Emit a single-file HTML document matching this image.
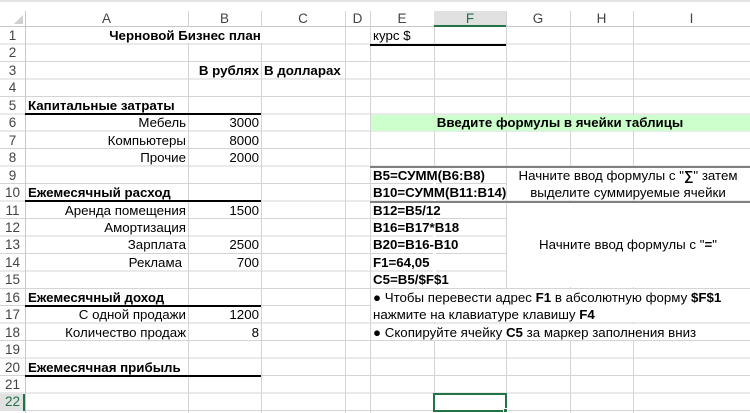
<!DOCTYPE html>
<html><head><meta charset="utf-8"><style>
*{margin:0;padding:0;box-sizing:border-box}
body{width:750px;height:413px;overflow:hidden;background:#fff;position:relative;font-family:"Liberation Sans",Arial,sans-serif;font-size:13.3px;color:#000}
div{position:absolute}
.v{width:1px;background:#d4d4d4;top:11px;height:402px}
.hd{top:11px;height:16px;line-height:16px;text-align:center;color:#444;font-size:13.5px}
.rn{left:0;width:25px;text-align:center;color:#444;height:17.45px;line-height:18px;font-size:13.5px}
.c{height:17.45px;line-height:18px;white-space:nowrap}
.b{font-weight:bold}
.r{text-align:right}
.w{background:#fff}
.tk{height:2px;background:#000}
.gy{height:2px;background:#808080}
</style></head><body>
<div style="left:0;top:0;width:750px;height:2px;background:#e4e4e4"></div>
<div style="left:0;top:27px;width:750px;height:386px;background:repeating-linear-gradient(to bottom,transparent 0,transparent 16.45px,#d4d4d4 16.45px,#d4d4d4 17.45px)"></div>
<div style="left:0;top:26px;width:750px;height:1px;background:#c8c8c8"></div>
<div class="v" style="left:25px;background:#c8c8c8"></div>
<div class="v" style="left:188px"></div>
<div class="v" style="left:261px"></div>
<div class="v" style="left:345px"></div>
<div class="v" style="left:370px"></div>
<div class="v" style="left:434px"></div>
<div class="v" style="left:506px"></div>
<div class="v" style="left:570px"></div>
<div class="v" style="left:633px"></div>
<div style="left:14px;top:15px;width:0;height:0;border-left:9px solid transparent;border-bottom:9px solid #d0d0d0"></div>
<div style="left:434px;top:11px;width:72px;height:16px;background:#e1e1e1;border-bottom:2px solid #217346"></div>
<div class="hd" style="left:25px;width:163px">A</div>
<div class="hd" style="left:188px;width:73px">B</div>
<div class="hd" style="left:261px;width:84px">C</div>
<div class="hd" style="left:345px;width:25px">D</div>
<div class="hd" style="left:370px;width:64px">E</div>
<div class="hd" style="left:434px;width:72px;color:#217346">F</div>
<div class="hd" style="left:506px;width:64px">G</div>
<div class="hd" style="left:570px;width:63px">H</div>
<div class="hd" style="left:633px;width:117px">I</div>
<div class="w" style="left:26px;top:27px;width:318px;height:16.45px"></div>
<div style="left:371px;top:114.8px;width:379px;height:16.45px;background:#ccffcc"></div>
<div class="w" style="left:433px;top:167px;width:3px;height:121px"></div>
<div class="w" style="left:507px;top:167px;width:243px;height:33px"></div>
<div class="w" style="left:507px;top:202px;width:243px;height:85px"></div>
<div class="w" style="left:371px;top:289px;width:379px;height:33px"></div>
<div class="w" style="left:371px;top:323.5px;width:379px;height:16px"></div>
<div style="left:0;top:393.5px;width:25px;height:17px;background:#e1e1e1;border-right:2px solid #217346"></div>
<div class="rn" style="top:27px">1</div><div class="rn" style="top:44.45px">2</div><div class="rn" style="top:61.9px">3</div><div class="rn" style="top:79.35px">4</div><div class="rn" style="top:96.8px">5</div><div class="rn" style="top:114.25px">6</div><div class="rn" style="top:131.7px">7</div><div class="rn" style="top:149.15px">8</div><div class="rn" style="top:166.6px">9</div><div class="rn" style="top:184.05px">10</div><div class="rn" style="top:201.5px">11</div><div class="rn" style="top:218.95px">12</div><div class="rn" style="top:236.4px">13</div><div class="rn" style="top:253.85px">14</div><div class="rn" style="top:271.3px">15</div><div class="rn" style="top:288.75px">16</div><div class="rn" style="top:306.2px">17</div><div class="rn" style="top:323.65px">18</div><div class="rn" style="top:341.1px">19</div><div class="rn" style="top:358.55px">20</div><div class="rn" style="top:376px">21</div><div class="rn" style="top:393.45px;color:#217346">22</div>
<div class="tk" style="left:25px;top:113px;width:236px"></div>
<div class="tk" style="left:25px;top:200px;width:236px"></div>
<div class="tk" style="left:25px;top:305px;width:236px"></div>
<div class="tk" style="left:25px;top:375px;width:236px"></div>
<div class="tk" style="left:370px;top:43.5px;width:136px"></div>
<div class="gy" style="left:370px;top:165.5px;width:380px"></div>
<div class="gy" style="left:370px;top:200.5px;width:380px"></div>
<div class="c b" style="left:25px;top:27px;width:320px;text-align:center">Черновой Бизнес план</div>
<div class="c" style="left:373px;top:27px">курс $</div>
<div class="c b r" style="left:188px;top:61.9px;width:71px">В рублях</div>
<div class="c b" style="left:264px;top:61.9px">В долларах</div>
<div class="c b" style="left:28px;top:96.8px">Капитальные затраты</div>
<div class="c r" style="left:25px;top:114.25px;width:161px">Мебель</div><div class="c r" style="left:188px;top:114.25px;width:71px">3000</div>
<div class="c r" style="left:25px;top:131.7px;width:161px">Компьютеры</div><div class="c r" style="left:188px;top:131.7px;width:71px">8000</div>
<div class="c r" style="left:25px;top:149.15px;width:161px">Прочие</div><div class="c r" style="left:188px;top:149.15px;width:71px">2000</div>
<div class="c b" style="left:28px;top:184.05px">Ежемесячный расход</div>
<div class="c r" style="left:25px;top:201.5px;width:161px">Аренда помещения</div><div class="c r" style="left:188px;top:201.5px;width:71px">1500</div>
<div class="c r" style="left:25px;top:218.95px;width:161px">Амортизация</div>
<div class="c r" style="left:25px;top:236.4px;width:161px">Зарплата</div><div class="c r" style="left:188px;top:236.4px;width:71px">2500</div>
<div class="c r" style="left:25px;top:253.85px;width:157px">Реклама</div><div class="c r" style="left:188px;top:253.85px;width:71px">700</div>
<div class="c b" style="left:28px;top:288.75px">Ежемесячный доход</div>
<div class="c r" style="left:25px;top:306.2px;width:161px">С одной продажи</div><div class="c r" style="left:188px;top:306.2px;width:71px">1200</div>
<div class="c r" style="left:25px;top:323.65px;width:161px">Количество продаж</div><div class="c r" style="left:188px;top:323.65px;width:71px">8</div>
<div class="c b" style="left:28px;top:358.55px">Ежемесячная прибыль</div>
<div class="c b" style="left:370px;top:114.25px;width:380px;text-align:center">Введите формулы в ячейки таблицы</div>
<div class="c b" style="left:373px;top:166.6px">B5=СУММ(B6:B8)</div>
<div class="c b" style="left:373px;top:184.05px">B10=СУММ(B11:B14)</div>
<div class="c" style="left:506px;top:166.6px;width:244px;text-align:center">Начните ввод формулы с "<b>∑</b>" затем</div>
<div class="c" style="left:506px;top:184.05px;width:244px;text-align:center">выделите суммируемые ячейки</div>
<div class="c b" style="left:373px;top:201.5px">B12=B5/12</div>
<div class="c b" style="left:373px;top:218.95px">B16=B17*B18</div>
<div class="c b" style="left:373px;top:236.4px">B20=B16-B10</div>
<div class="c b" style="left:373px;top:253.85px">F1=64,05</div>
<div class="c b" style="left:373px;top:271.3px">C5=B5/$F$1</div>
<div class="c" style="left:506px;top:236.4px;width:244px;text-align:center">Начните ввод формулы с "<b>=</b>"</div>
<div class="c" style="left:373px;top:288.75px">● Чтобы перевести адрес <b>F1</b> в абсолютную форму <b>$F$1</b></div>
<div class="c" style="left:373px;top:306.2px">нажмите на клавиатуре клавишу <b>F4</b></div>
<div class="c" style="left:373px;top:323.65px">● Скопируйте ячейку <b>C5</b> за маркер заполнения вниз</div>
<div style="left:433px;top:392.5px;width:74px;height:19px;border:2px solid #217346"></div>
<div style="left:503px;top:408px;width:5px;height:5px;background:#217346;border:1px solid #fff"></div>
</body></html>
